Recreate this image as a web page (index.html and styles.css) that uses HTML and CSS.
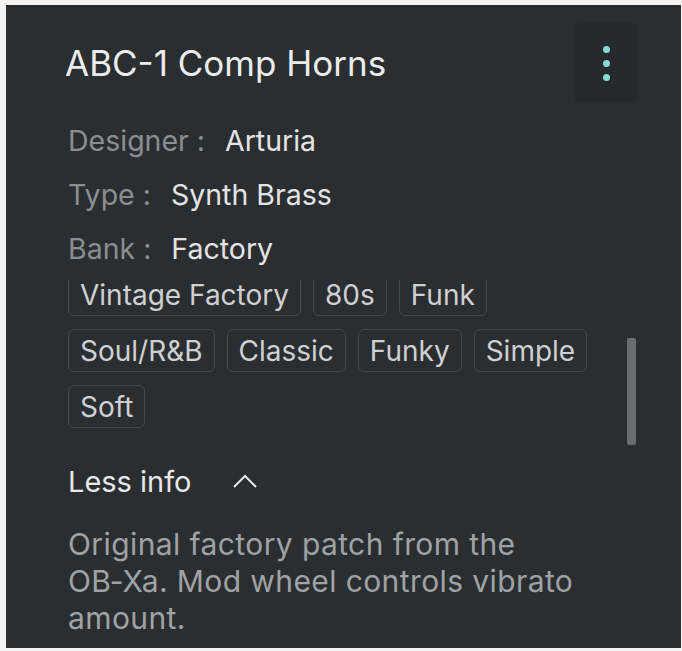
FILE: index.html
```html
<!doctype html>
<html lang="en">
<head>
<meta charset="utf-8">
<meta name="viewport" content="initial-scale=1">
<title>ABC-1 Comp Horns</title>
<link rel="stylesheet" href="styles.css">
</head>
<body>
  <div class="panel">
    <header class="head">
      <h1>ABC-1 Comp Horns</h1>
      <button class="menu" aria-label="More">
        <span class="dot"></span><span class="dot"></span><span class="dot"></span>
      </button>
    </header>

    <dl class="meta">
      <div class="row"><dt>Designer :</dt><dd>Arturia</dd></div>
      <div class="row"><dt>Type :</dt><dd>Synth Brass</dd></div>
      <div class="row"><dt>Bank :</dt><dd>Factory</dd></div>
    </dl>

    <div class="tagview">
      <ul class="tags">
        <li>Vintage Factory</li>
        <li>80s</li>
        <li>Funk</li>
        <li>Soul/R&amp;B</li>
        <li>Classic</li>
        <li>Funky</li>
        <li>Simple</li>
        <li>Soft</li>
      </ul>
      <div class="scrollbar"></div>
    </div>

    <button class="toggle">Less info
      <svg width="26" height="16" viewBox="0 0 26 16"><path d="M2 14 L13 3 L24 14" fill="none" stroke="#e6e6e6" stroke-width="2"/></svg>
    </button>

    <p class="desc">Original factory patch from the OB&#8209;Xa. Mod wheel controls vibrato amount.</p>
  </div>
</body>
</html>
```

FILE: styles.css
```css
* {
  box-sizing: border-box;
}

body {
  margin: 0;
  background-color: #f3f3f3;
  font-family: Inter, "Noto Sans", sans-serif;
}

.panel {
  margin: 5px 1px 0 6px;
  height: 643px;
  overflow: hidden;
  background-color: #2b2e31;
  padding: 18px 44px 0 62px;
}

.head {
  display: flex;
  align-items: center;
  justify-content: space-between;
  height: 80px;
}

h1 {
  margin: 0 0 0 -3px;
  font-size: 35px;
  font-weight: 400;
  color: #ececec;
}

.menu {
  width: 62px;
  height: 80px;
  border: none;
  border-radius: 4px;
  background-color: #272a2d;
  display: flex;
  flex-direction: column;
  align-items: center;
  justify-content: center;
  gap: 7px;
  padding: 0;
}

.dot {
  width: 7px;
  height: 7px;
  border-radius: 50%;
  background-color: #86dcd3;
}

.meta {
  margin: 10px 0 0;
}

.row {
  display: flex;
  height: 54px;
  align-items: center;
  font-size: 28.5px;
}

dt {
  color: #8b8d90;
  margin-right: 20px;
}

dd {
  margin: 0;
  color: #e4e4e4;
}

.tagview {
  position: relative;
  height: 165px;
  margin-top: 5px;
  overflow: hidden;
}

.tags {
  list-style: none;
  margin: -7px 0 0;
  padding: 0;
  display: flex;
  flex-wrap: wrap;
  gap: 13px 12px;
  width: 535px;
}

.tags li {
  height: 43px;
  padding: 0 11px;
  display: flex;
  align-items: center;
  border: 1px solid #45484b;
  border-radius: 6px;
  font-size: 28px;
  color: #cfd0d1;
}

.scrollbar {
  position: absolute;
  right: 1px;
  top: 58px;
  width: 9px;
  height: 107px;
  border-radius: 2px;
  background-color: #6a6d70;
}

.toggle {
  display: flex;
  align-items: center;
  gap: 40px;
  height: 40px;
  margin-top: 16px;
  padding: 0;
  border: none;
  background: none;
  font-family: inherit;
  font-size: 29px;
  color: #e8e8e8;
}

.desc {
  max-width: 525px;
  margin: 25px 0 0;
  font-size: 30px;
  letter-spacing: 0.4px;
  line-height: 37px;
  color: #a0a2a4;
}
```
